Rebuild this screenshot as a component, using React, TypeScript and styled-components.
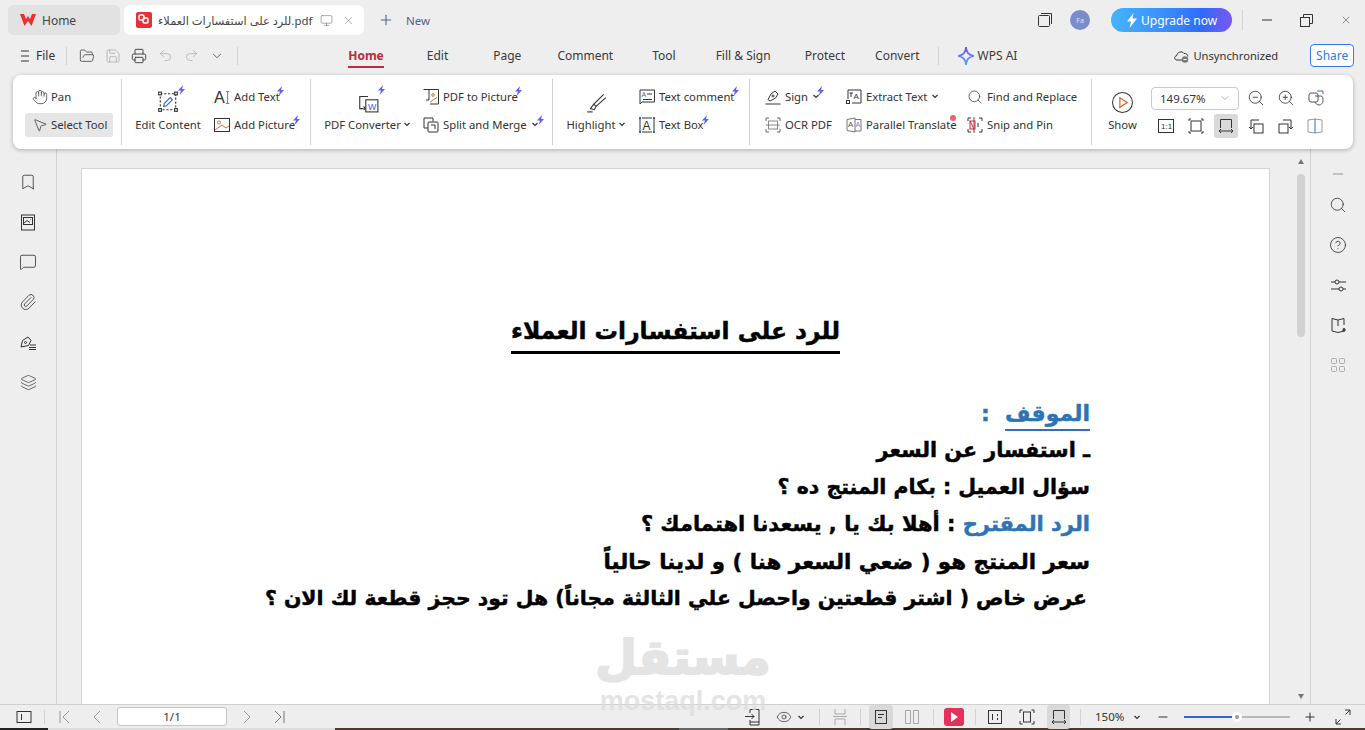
import { ReactNode } from 'react';
import styled, { createGlobalStyle } from 'styled-components';
import {
	Bookmark,
	ChevronDown,
	CircleHelp,
	Eye,
	FolderOpen,
	Hand,
	Layers,
	MessageSquare,
	Minus,
	Monitor,
	MousePointer2,
	Paperclip,
	Plus,
	Printer,
	Redo2,
	Save,
	Search,
	Undo2,
	X,
	ZoomIn,
	ZoomOut,
} from 'lucide-react';

const GlobalStyle = createGlobalStyle`
	html, body { margin: 0; padding: 0; background: #eee; }
	body { font-family: "Noto Sans", "DejaVu Sans", sans-serif; font-size: 12px; color: #333; }
	* { box-sizing: border-box; }
`;

const Screen = styled.div`
	position: relative;
	width: 1365px;
	height: 730px;
	display: flex;
	flex-direction: column;
	overflow: hidden;
	background: #eeeeee;
`;

const Row = styled.div<{ $h: number; $pl?: number; $pb?: number }>`
	display: flex;
	align-items: center;
	flex: none;
	height: ${(p) => p.$h}px;
	padding-left: ${(p) => p.$pl ?? 0}px;
	padding-bottom: ${(p) => p.$pb ?? 0}px;
`;

const Slot = styled.div<{ $w?: number; $ml?: number; $mb?: number; $on?: boolean }>`
	flex: none;
	display: flex;
	align-items: center;
	justify-content: center;
	width: ${(p) => p.$w ?? 22}px;
	height: 24px;
	margin-left: ${(p) => p.$ml ?? 0}px;
	margin-bottom: ${(p) => p.$mb ?? 0}px;
	border-radius: 3px;
	background: ${(p) => (p.$on ? '#d9d9d9' : 'transparent')};
	color: #333;
`;

const Sep = styled.div<{ $ml?: number; $h?: number }>`
	flex: none;
	width: 1px;
	height: ${(p) => p.$h ?? 22}px;
	margin-left: ${(p) => p.$ml ?? 0}px;
	background: #d2d2d2;
`;

/* title bar */
const Tab = styled.div<{ $active?: boolean; $w: number; $ml?: number }>`
	flex: none;
	display: flex;
	align-items: center;
	width: ${(p) => p.$w}px;
	height: 30px;
	margin-left: ${(p) => p.$ml ?? 0}px;
	padding-left: 12px;
	border-radius: 6px;
	background: ${(p) => (p.$active ? '#fff' : '#e2e2e2')};
`;

const TabLabel = styled.span<{ $ml: number; $w?: number; $size?: number }>`
	flex: none;
	margin-left: ${(p) => p.$ml}px;
	width: ${(p) => (p.$w ? `${p.$w}px` : 'auto')};
	font-size: ${(p) => p.$size ?? 12}px;
	color: #444;
	white-space: nowrap;
`;

const NewLabel = styled.span`
	margin-left: 12px;
	font-size: 11.5px;
	color: #50608a;
`;

const Avatar = styled.div`
	flex: none;
	display: flex;
	align-items: center;
	justify-content: center;
	width: 20px;
	height: 20px;
	margin-left: 17px;
	border-radius: 50%;
	background: #7c8ccb;
	color: #dfe4f5;
	font-size: 7px;
`;

const Upgrade = styled.div`
	flex: none;
	display: flex;
	align-items: center;
	justify-content: center;
	gap: 3px;
	width: 121px;
	height: 24px;
	margin-left: 21px;
	border-radius: 12px;
	background: linear-gradient(90deg, #45b4fb 0%, #3a8dfb 45%, #2f6bfb 75%, #7c57f5 100%);
	color: #fff;
	font-size: 12px;
`;

/* menu bar */
const MenuLabel = styled.span<{ $ml: number; $size?: number }>`
	flex: none;
	margin-left: ${(p) => p.$ml}px;
	white-space: nowrap;
	font-size: ${(p) => p.$size ?? 12}px;
	color: #333;
`;

const MenuTab = styled.div<{ $active?: boolean; $ml: number }>`
	flex: none;
	position: relative;
	margin-left: ${(p) => p.$ml}px;
	margin-top: 1px;
	line-height: 18px;
	font-size: 12px;
	white-space: nowrap;
	font-weight: ${(p) => (p.$active ? 700 : 400)};
	color: ${(p) => (p.$active ? '#c0283c' : '#3a3a3a')};
	&::after {
		content: '';
		display: ${(p) => (p.$active ? 'block' : 'none')};
		position: absolute;
		left: 0;
		right: 0;
		bottom: -3px;
		height: 2px;
		background: #c0283c;
	}
`;

const ShareButton = styled.div`
	flex: none;
	display: flex;
	align-items: center;
	justify-content: center;
	width: 44px;
	height: 23px;
	margin-left: 32px;
	border: 1px solid #2f7bf0;
	border-radius: 4px;
	background: #fff;
	color: #2f7bf0;
	font-size: 12px;
`;

/* ribbon */
const Ribbon = styled.div`
	position: relative;
	z-index: 2;
	flex: none;
	display: flex;
	width: 1340px;
	height: 74px;
	margin-left: 13px;
	padding: 4px 0;
	border-radius: 8px;
	background: #fff;
	box-shadow: 0 1px 4px rgba(0, 0, 0, 0.28);
`;

const Group = styled.div<{ $w: number; $pl: number; $last?: boolean }>`
	flex: none;
	display: flex;
	width: ${(p) => p.$w}px;
	padding-left: ${(p) => p.$pl}px;
	border-right: ${(p) => (p.$last ? 'none' : '1px solid #d2d2d2')};
`;

const Col = styled.div<{ $w?: number; $ml?: number }>`
	flex: none;
	display: flex;
	flex-direction: column;
	gap: 4px;
	padding-top: 6px;
	width: ${(p) => (p.$w ? `${p.$w}px` : 'auto')};
	margin-left: ${(p) => p.$ml ?? 0}px;
`;

const Item = styled.div<{ $on?: boolean; $pad?: boolean }>`
	position: relative;
	align-self: flex-start;
	display: flex;
	align-items: center;
	gap: ${(p) => (p.$pad ? 3 : 4)}px;
	height: 24px;
	padding: 0 ${(p) => (p.$pad ? 6 : 0)}px 2px ${(p) => (p.$pad ? 7 : 0)}px;
	border-radius: 3px;
	background: ${(p) => (p.$on ? '#e6e6e6' : 'transparent')};
	white-space: nowrap;
	font-size: 11.3px;
	color: #333;
`;

const IconBox = styled.span`
	flex: none;
	display: flex;
	align-items: center;
	justify-content: center;
	width: 16px;
	height: 16px;
	margin-bottom: -2px;
`;

const Big = styled.div<{ $w: number }>`
	position: relative;
	flex: none;
	width: ${(p) => p.$w}px;
	padding-top: 10px;
	display: flex;
	flex-direction: column;
	align-items: center;
	white-space: nowrap;
	font-size: 11.3px;
	color: #333;
`;

const BigIcon = styled.div`
	height: 26px;
	display: flex;
	align-items: center;
	justify-content: center;
`;

const BigLabel = styled.div`
	display: flex;
	align-items: center;
	height: 24px;
	gap: 2px;
	margin-top: -2px;
	padding-bottom: 2px;
`;

const BoltBadge = styled.span<{ $r: number; $t: number }>`
	position: absolute;
	right: ${(p) => p.$r}px;
	top: ${(p) => p.$t}px;
	display: flex;
`;

const RedDot = styled.span`
	position: absolute;
	right: 1px;
	top: 2px;
	width: 6px;
	height: 6px;
	border-radius: 50%;
	background: #f2605f;
`;

const ZoomSelect = styled.div`
	flex: none;
	display: flex;
	align-items: center;
	justify-content: space-between;
	width: 88px;
	height: 23px;
	margin-right: -1px;
	padding: 0 7px 0 8px;
	border: 1px solid #c9c9c9;
	border-radius: 4px;
	font-size: 11.5px;
	color: #333;
`;

const ZoomRows = styled.div`
	display: flex;
	flex-direction: column;
	gap: 4px;
	margin-left: 14px;
	padding-top: 7px;
`;

const ZoomRow = styled.div<{ $pl?: number }>`
	display: flex;
	align-items: center;
	gap: 6px;
	height: 24px;
	padding-left: ${(p) => p.$pl ?? 0}px;
`;

/* body */
const Body = styled.div`
	flex: 1;
	min-height: 0;
	display: flex;
`;

const SideBar = styled.div<{ $right?: boolean; $w: number; $top: number }>`
	flex: none;
	display: flex;
	flex-direction: column;
	align-items: center;
	gap: 16px;
	width: ${(p) => p.$w}px;
	padding-top: ${(p) => p.$top}px;
	border-${(p) => (p.$right ? 'left' : 'right')}: 1px solid #d2d2d2;
`;

const Canvas = styled.div`
	flex: 1;
	min-width: 0;
	display: flex;
	padding: 19px 0 0 24px;
`;

const Page = styled.div`
	flex: none;
	width: 1189px;
	margin-bottom: -4px;
	padding-top: 144px;
	border: 1px solid #d4d4d4;
	border-bottom: none;
	background: #fff;
	font-family: "DejaVu Sans", sans-serif;
	font-weight: 700;
	-webkit-text-stroke: 0.45px currentColor;
	color: #000;
	direction: rtl;
`;

const Title = styled.h1`
	margin: 0 auto;
	width: fit-content;
	height: 41px;
	line-height: 36px;
	border-bottom: 3px solid #000;
	font-size: 23.4px;
	font-weight: 700;
`;

const Lines = styled.div`
	margin-top: 41px;
	padding-right: 179px;
`;

const Line = styled.div<{ $size: number; $inset?: number }>`
	height: 37px;
	line-height: 37px;
	white-space: nowrap;
	font-size: ${(p) => p.$size}px;
	padding-right: ${(p) => p.$inset ?? 0}px;
`;

const Blue = styled.span<{ $rule?: boolean }>`
	color: #2e74b5;
	padding-bottom: ${(p) => (p.$rule ? 3 : 0)}px;
	border-bottom: ${(p) => (p.$rule ? '2px solid #2e74b5' : 'none')};
`;

const Scroll = styled.div`
	flex: none;
	position: relative;
	width: 40px;
	padding-left: 27px;
`;

const ScrollArrow = styled.div<{ $down?: boolean }>`
	position: absolute;
	left: 28px;
	${(p) => (p.$down ? 'bottom: 5px;' : 'top: -9px;')}
	width: 0;
	height: 0;
	border-left: 3.5px solid transparent;
	border-right: 3.5px solid transparent;
	${(p) => (p.$down ? 'border-top: 5px solid #777;' : 'border-bottom: 5px solid #777;')}
`;

const Thumb = styled.div`
	margin-top: 6px;
	width: 8px;
	height: 163px;
	border-radius: 4px;
	background: #d2d2d2;
`;

/* status bar */
const Status = styled.div`
	position: relative;
	z-index: 1;
	flex: none;
	display: flex;
	align-items: center;
	justify-content: space-between;
	height: 24px;
	border-top: 1px solid #d0d0d0;
	background: #eeeeee;
`;

const StatusSide = styled.div<{ $pl?: number; $pr?: number }>`
	display: flex;
	align-items: center;
	padding-left: ${(p) => p.$pl ?? 0}px;
	padding-right: ${(p) => p.$pr ?? 0}px;
`;

const PageInput = styled.div`
	flex: none;
	display: flex;
	align-items: center;
	justify-content: center;
	width: 110px;
	height: 19px;
	margin-left: 9px;
	border: 1px solid #c4c4c4;
	border-radius: 3px;
	background: #fff;
	font-size: 11.5px;
	color: #333;
`;

const PercentLabel = styled.span`
	flex: none;
	width: 28px;
	margin-left: 14px;
	font-size: 11.5px;
	color: #333;
`;

const Slider = styled.div`
	position: relative;
	flex: none;
	width: 106px;
	height: 2px;
	margin-left: 10px;
	background: #b8b8b8;
`;

const SliderFill = styled.div<{ $w: number }>`
	width: ${(p) => p.$w}px;
	height: 2px;
	background: #2f66c8;
`;

const SliderKnob = styled.div<{ $x: number }>`
	position: absolute;
	left: ${(p) => p.$x - 5}px;
	top: -4px;
	width: 10px;
	height: 10px;
	border: 3px solid #fff;
	border-radius: 50%;
	background: #999;
`;

const RedPlay = styled.div`
	flex: none;
	display: flex;
	align-items: center;
	justify-content: center;
	width: 20px;
	height: 18px;
	margin-left: 10px;
	border-radius: 3px;
	background: #e5305c;
`;

const Desktop = styled.div`
	flex: none;
	height: 2px;
	background: linear-gradient(
		90deg,
		#222 0,
		#222 48px,
		#ddd 48px,
		#ddd 335px,
		#4a3a30 335px,
		#4a3a30 679px,
		#666 679px,
		#666 728px,
		#4a3a30 728px
	);
`;

const Watermark = styled.div`
	position: absolute;
	z-index: 3;
	left: 597px;
	top: 629px;
	width: 172px;
	display: flex;
	flex-direction: column;
	align-items: center;
	pointer-events: none;
	color: #dcdcdc;
	opacity: 0.75;
	font-weight: 700;
`;

const WatermarkMain = styled.div`
	height: 57px;
	line-height: 57px;
	font-family: "DejaVu Sans", sans-serif;
	font-size: 48px;
	-webkit-text-stroke: 2px currentColor;
`;

const WatermarkSub = styled.div`
	height: 31px;
	line-height: 31px;
	font-family: "Liberation Sans", sans-serif;
	font-size: 27px;
`;

const Drawn = styled.svg`
	display: block;
	flex: none;
	fill: none;
	stroke: currentColor;
	stroke-width: 1;
	color: #333;
`;

const GlyphText = styled.text<{ $fill?: string }>`
	font-family: "Liberation Sans", sans-serif;
	stroke: none;
	fill: ${(p) => p.$fill ?? '#333'};
`;

function Svg({ s = 20, vb = 20, children }: { s?: number; vb?: number; children: ReactNode }) {
	return (
		<Drawn width={s} height={s} viewBox={`0 0 ${vb} ${vb}`}>
			{children}
		</Drawn>
	);
}

function Bolt({ r, t }: { r: number; t: number }) {
	return (
		<BoltBadge $r={r} $t={t}>
			<svg width="9" height="10" viewBox="0 0 9 10">
				<path d="M6 0 L1 5.6 H4 L2.6 10 L8 4 H5 Z" fill="#5b62f5" />
			</svg>
		</BoltBadge>
	);
}

const Chev = ({ s = 8 }: { s?: number }) => (
	<svg width={s} height={s} viewBox="0 0 8 8" fill="none" stroke="#333" strokeWidth="1.2">
		<path d="M1.5 3 L4 5.5 L6.5 3" />
	</svg>
);

const line = { size: 16, strokeWidth: 1.1, color: '#333' };

export default function App() {
	return (
		<Screen>
			<GlobalStyle />
			<Row $h={40} $pl={8}>
				<Tab $w={112}>
					<svg width="16" height="14" viewBox="0 0 16 14">
						<path d="M0 1 L4 1 L6 6 L8 3 L10 6 L12 1 L16 1 L11.5 13 L8 8 L4.5 13 Z" fill="#e8322e" />
					</svg>
					<TabLabel $ml={6}>Home</TabLabel>
				</Tab>
				<Tab $active $w={240} $ml={4}>
					<svg width="16" height="16" viewBox="0 0 16 16">
						<rect width="16" height="16" rx="2" fill="#e8303a" />
						<rect x="3" y="3" width="5" height="5" rx="1.5" fill="none" stroke="#fff" strokeWidth="1.5" />
						<rect x="7" y="6" width="5" height="5" rx="1.5" fill="none" stroke="#fff" strokeWidth="1.5" />
					</svg>
					<TabLabel $ml={6} $w={157} $size={11.4}>للرد على استفسارات العملاء.pdf</TabLabel>
					<Slot $w={14} $ml={4}>
						<Monitor size={13} strokeWidth={1} color="#666" />
					</Slot>
					<Slot $w={14} $ml={8}>
						<X size={13} strokeWidth={1} color="#777" />
					</Slot>
				</Tab>
				<Slot $w={16} $ml={14}>
					<Plus size={16} strokeWidth={1.6} color="#50608a" />
				</Slot>
				<NewLabel>New</NewLabel>
				<Slot $w={16} $ml={607}>
					<Svg s={16} vb={16}>
						<rect x="1.5" y="3.5" width="11" height="11" rx="1" />
						<path d="M4 1.5 H14.5 V12" />
					</Svg>
				</Slot>
				<Avatar>Fa</Avatar>
				<Upgrade>
					<svg width="12" height="15" viewBox="0 0 12 15">
						<path d="M7.5 0 L1 8.5 H5 L3.5 15 L11 5.5 H6.5 Z" fill="#fff" />
					</svg>
					Upgrade now
				</Upgrade>
				<Sep $ml={10} $h={20} />
				<Slot $w={12} $ml={18}>
					<Svg s={12} vb={12}>
						<path d="M1 6 H11" />
					</Svg>
				</Slot>
				<Slot $w={14} $ml={26}>
					<Svg s={13} vb={13}>
						<rect x="0.5" y="3.5" width="9" height="9" />
						<path d="M3.5 3 V0.5 H12.5 V9.5 H10" />
					</Svg>
				</Slot>
				<Slot $w={12} $ml={27}>
					<X size={14} strokeWidth={1} color="#333" />
				</Slot>
			</Row>
			<Row $h={35} $pl={15} $pb={4}>
				<Slot $w={18}>
					<Svg s={14} vb={14}>
						<path d="M4 2 H12 M4 7 H12 M4 12 H12" />
					</Svg>
				</Slot>
				<MenuLabel $ml={3}>File</MenuLabel>
				<Sep $ml={11} $h={18} />
				<Slot $w={20} $ml={10}>
					<FolderOpen {...line} />
				</Slot>
				<Slot $w={20} $ml={6}>
					<Save size={16} strokeWidth={1.1} color="#a8a8a8" />
				</Slot>
				<Slot $w={20} $ml={6}>
					<Printer size={16} strokeWidth={1.3} color="#333" />
				</Slot>
				<Slot $w={20} $ml={6}>
					<Undo2 size={15} strokeWidth={1.1} color="#a8a8a8" />
				</Slot>
				<Slot $w={20} $ml={6}>
					<Redo2 size={15} strokeWidth={1.1} color="#a8a8a8" />
				</Slot>
				<Slot $w={20} $ml={6}>
					<ChevronDown size={14} strokeWidth={1.4} color="#444" />
				</Slot>
				<Sep $ml={10} $h={18} />
				<MenuTab $active $ml={110}>Home</MenuTab>
				<MenuTab $ml={43}>Edit</MenuTab>
				<MenuTab $ml={45}>Page</MenuTab>
				<MenuTab $ml={36}>Comment</MenuTab>
				<MenuTab $ml={39}>Tool</MenuTab>
				<MenuTab $ml={40}>Fill &amp; Sign</MenuTab>
				<MenuTab $ml={34}>Protect</MenuTab>
				<MenuTab $ml={30}>Convert</MenuTab>
				<Sep $ml={18} $h={18} />
				<Slot $w={18} $ml={18}>
					<svg width="16" height="18" viewBox="0 0 16 18">
						<defs>
							<linearGradient id="aiStar" x1="0" y1="0" x2="0" y2="1">
								<stop offset="0" stopColor="#7a4df0" />
								<stop offset="1" stopColor="#4aa8f5" />
							</linearGradient>
						</defs>
						<path d="M8 0 C8.6 5.5 10 7.8 16 9 C10 10.2 8.6 12.5 8 18 C7.4 12.5 6 10.2 0 9 C6 7.8 7.4 5.5 8 0 Z" fill="none" stroke="url(#aiStar)" strokeWidth="1.7" />
					</svg>
				</Slot>
				<MenuTab $ml={3}>WPS AI</MenuTab>
				<Slot $w={18} $ml={155}>
					<Svg s={17} vb={17}>
						<path d="M9 13 H4 C1 13 1 9 3.8 8.6 C4 5 9 3.5 11 6.5 C13.5 6 15 8 14.8 9.5" />
						<circle cx="12" cy="12.5" r="3.2" fill="#777" stroke="none" />
						<path d="M10.4 12.5 H13.6" stroke="#fff" />
					</Svg>
				</Slot>
				<MenuLabel $ml={3} $size={11.2}>Unsynchronized</MenuLabel>
				<ShareButton>Share</ShareButton>
			</Row>
			<Ribbon>
				<Group $w={109} $pl={12}>
					<Col>
						<Item $pad>
							<IconBox>
								<Hand {...line} />
							</IconBox>
							Pan
						</Item>
						<Item $pad $on>
							<IconBox>
								<MousePointer2 {...line} />
							</IconBox>
							Select Tool
						</Item>
					</Col>
				</Group>
				<Group $w={189} $pl={13}>
					<Big $w={66}>
						<BigIcon>
							<Svg s={22}>
								<path d="M3 2.5 H17 V17 H3 Z" strokeDasharray="2 1.5" />
								<rect x="1.5" y="1" width="2.5" height="2.5" fill="#fff" />
								<rect x="16" y="1" width="2.5" height="2.5" fill="#fff" />
								<rect x="1.5" y="16" width="2.5" height="2.5" fill="#fff" />
								<rect x="16" y="16" width="2.5" height="2.5" fill="#fff" />
								<path d="M6 14 L6.6 11.4 L12 6 L14 8 L8.6 13.4 Z" stroke="#2f66e0" />
							</Svg>
						</BigIcon>
						<BigLabel>Edit Content</BigLabel>
						<Bolt r={15} t={6} />
					</Big>
					<Col $ml={13}>
						<Item>
							<IconBox>
								<Svg s={17}>
									<GlyphText x="0" y="16" fontSize="19">A</GlyphText>
									<path d="M16 3 V17 M14 3 H18 M14 17 H18" stroke="#2f66e0" />
								</Svg>
							</IconBox>
							Add Text
							<Bolt r={-5} t={1} />
						</Item>
						<Item>
							<IconBox>
								<Svg s={16} vb={16}>
									<rect x="0.5" y="1.5" width="15" height="13" />
									<circle cx="5" cy="5.5" r="1.5" stroke="#dd6b2a" />
									<path d="M1 13 L8 8 L12 11 L15 9" stroke="#dd6b2a" />
								</Svg>
							</IconBox>
							Add Picture
							<Bolt r={-6} t={2} />
						</Item>
					</Col>
				</Group>
				<Group $w={242} $pl={13}>
					<Big $w={87}>
						<BigIcon>
							<Svg s={22}>
								<path d="M10 5 H2.5 V16 H6" />
								<path d="M6 14 L7.5 16 L6 17" />
								<rect x="8" y="8" width="11" height="11" />
								<GlyphText x="10" y="17" fontSize="8" $fill="#2f66e0">W</GlyphText>
							</Svg>
						</BigIcon>
						<BigLabel>
							PDF Converter
							<Chev />
						</BigLabel>
						<Bolt r={25} t={6} />
					</Big>
					<Col $ml={12}>
						<Item>
							<IconBox>
								<Svg s={16} vb={16}>
									<path d="M6 0.5 H15.5 V15 H7 M0.5 0.5 H6 V11 H3" />
									<circle cx="10" cy="6" r="1.3" stroke="#dd6b2a" />
									<path d="M7 13 L14 8.5" stroke="#dd6b2a" />
								</Svg>
							</IconBox>
							PDF to Picture
							<Bolt r={-5} t={1} />
						</Item>
						<Item>
							<IconBox>
								<Svg s={16} vb={16}>
									<path d="M10 4.5 V1 H1 V11 H5" />
									<rect x="5" y="5" width="10" height="10" rx="1" />
									<path d="M8 8 H12 V12" />
								</Svg>
							</IconBox>
							Split and Merge
							<Chev />
							<Bolt r={-6} t={2} />
						</Item>
					</Col>
				</Group>
				<Group $w={197} $pl={13}>
					<Big $w={60}>
						<BigIcon>
							<Svg s={22}>
								<path d="M8 12 L17 3 M10 14 L19 6 M8 12 L5 16 L8.5 17 L10 14 Z" />
								<path d="M2 19 H7" />
							</Svg>
						</BigIcon>
						<BigLabel>
							Highlight
							<Chev />
						</BigLabel>
					</Big>
					<Col $ml={13}>
						<Item>
							<IconBox>
								<Svg s={16} vb={16}>
									<path d="M1 1 H15.5 V13 H3 L1 15 Z" />
									<GlyphText x="2.5" y="8" fontSize="7" $fill="#2f66e0">A</GlyphText>
									<path d="M8 5 H13 M4 10.5 H13" />
								</Svg>
							</IconBox>
							Text comment
							<Bolt r={-6} t={1} />
						</Item>
						<Item>
							<IconBox>
								<Svg s={16} vb={16}>
									<path d="M1 2 V14 M15 2 V14 M3 1 H13 M3 15 H13" />
									<rect x="0" y="0" width="2" height="2" fill="#2f66e0" stroke="none" />
									<rect x="14" y="0" width="2" height="2" fill="#2f66e0" stroke="none" />
									<rect x="0" y="14" width="2" height="2" fill="#2f66e0" stroke="none" />
									<rect x="14" y="14" width="2" height="2" fill="#2f66e0" stroke="none" />
									<GlyphText x="3.5" y="12.5" fontSize="12">A</GlyphText>
								</Svg>
							</IconBox>
							Text Box
							<Bolt r={-6} t={2} />
						</Item>
					</Col>
				</Group>
				<Group $w={342} $pl={15}>
					<Col $w={81}>
						<Item>
							<IconBox>
								<Svg s={16} vb={16}>
									<path d="M3 10.5 L6 5 L10 2 L13 5 L10.5 9 L5 12 Z" />
									<circle cx="8" cy="7" r="1" />
									<path d="M0.5 15 H15.5" />
								</Svg>
							</IconBox>
							Sign
							<Chev />
							<Bolt r={-5} t={1} />
						</Item>
						<Item>
							<IconBox>
								<Svg s={16} vb={16}>
									<path d="M1 4 V1 H4 M12 1 H15 V4 M1 12 V15 H4 M12 15 H15 V12" stroke="#666" />
									<rect x="3.5" y="4" width="9" height="8" stroke="#888" />
									<path d="M1 8 H15" stroke="#888" />
								</Svg>
							</IconBox>
							OCR PDF
						</Item>
					</Col>
					<Col $w={121}>
						<Item>
							<IconBox>
								<Svg s={16} vb={16}>
									<path d="M2 10 V1 H15 V14 H6" />
									<rect x="0.5" y="11.5" width="3" height="3" />
									<GlyphText x="7.5" y="9.5" fontSize="8">A</GlyphText>
									<path d="M3.5 4 H7 M5 4 V8" />
								</Svg>
							</IconBox>
							Extract Text
							<Chev />
						</Item>
						<Item>
							<IconBox>
								<Svg s={16} vb={16}>
									<path d="M1 2.5 L9 1 V15 L1 13.5 Z M9 2.5 H15 V14 H9" stroke="#777" />
									<GlyphText x="2" y="10" fontSize="8" $fill="#555">A</GlyphText>
									<GlyphText x="9.5" y="10" fontSize="7" $fill="#8a72d8">A</GlyphText>
								</Svg>
							</IconBox>
							Parallel Translate
							<RedDot />
						</Item>
					</Col>
					<Col>
						<Item>
							<IconBox>
								<Search size={16} strokeWidth={1.1} color="#333" />
							</IconBox>
							Find and Replace
						</Item>
						<Item>
							<IconBox>
								<Svg s={16} vb={16}>
									<path d="M1 4 V1 H4 M12 1 H15 V4 M1 12 V15 H4 M12 15 H15 V12" />
									<rect x="3" y="4" width="5" height="8" stroke="#c0283c" />
									<path d="M7 0 V16 M3 4 L7 12" stroke="#c0283c" />
									<path d="M11 6 V10" />
								</Svg>
							</IconBox>
							Snip and Pin
						</Item>
					</Col>
				</Group>
				<Group $w={261} $pl={16} $last>
					<Big $w={29}>
						<BigIcon>
							<Svg s={21}>
								<circle cx="10" cy="10" r="9.5" />
								<path d="M7.5 5.5 L14.5 10 L7.5 14.5 Z" stroke="#d9692a" strokeWidth="1.2" />
							</Svg>
						</BigIcon>
						<BigLabel>Show</BigLabel>
					</Big>
					<ZoomRows>
						<ZoomRow>
							<ZoomSelect>
								149.67%
								<ChevronDown size={12} strokeWidth={1.1} color="#777" />
							</ZoomSelect>
							<Slot $w={24}>
								<ZoomOut size={18} strokeWidth={1.1} color="#333" />
							</Slot>
							<Slot $w={24}>
								<ZoomIn size={18} strokeWidth={1.1} color="#333" />
							</Slot>
							<Slot $w={24}>
								<Svg s={16} vb={16}>
									<rect x="1" y="3" width="9" height="9" rx="2" stroke="#555" />
									<path d="M7 6 H13 C15 6 15 9 15 11 C15 13 13 15 11 15 C9 15 7 13 7 12" stroke="#555" />
									<path d="M9 1 H15 V4" stroke="#2f66e0" />
								</Svg>
							</Slot>
						</ZoomRow>
						<ZoomRow $pl={3}>
							<Slot $w={24}>
								<Svg s={16} vb={16}>
									<rect x="0.5" y="1.5" width="15" height="13" />
									<GlyphText x="3" y="11" fontSize="8">1:1</GlyphText>
								</Svg>
							</Slot>
							<Slot $w={24}>
								<Svg s={16} vb={16}>
									<rect x="3" y="3" width="10" height="10" />
									<path d="M1 3 V1 H3 M13 1 H15 V3 M1 13 V15 H3 M13 15 H15 V13" />
								</Svg>
							</Slot>
							<Slot $w={24} $on>
								<Svg s={18} vb={18}>
									<path d="M3.5 11 V2.5 H14.5 V11" />
									<path d="M2 14 H16 M4 12 L2 14 L4 16 M14 12 L16 14 L14 16" />
								</Svg>
							</Slot>
							<Slot $w={24}>
								<Svg s={16} vb={16}>
									<rect x="6" y="6" width="9" height="9" />
									<path d="M3 11 V2 H11 M1 9 L3 11 L5 9" />
								</Svg>
							</Slot>
							<Slot $w={24}>
								<Svg s={16} vb={16}>
									<rect x="1" y="6" width="9" height="9" />
									<path d="M5 2 H13 V11 M11 9 L13 11 L15 9" />
								</Svg>
							</Slot>
							<Slot $w={24} $ml={-1}>
								<Svg s={16} vb={16}>
									<path d="M1 2 L8 1 L15 2 V14 L8 15 L1 14 Z" stroke="#999" />
									<path d="M8 1 V15" stroke="#2f66e0" />
								</Svg>
							</Slot>
						</ZoomRow>
					</ZoomRows>
				</Group>
			</Ribbon>
			<Body>
				<SideBar $w={57} $top={21}>
					<Slot $w={24}>
						<Bookmark size={18} strokeWidth={1.1} color="#333" />
					</Slot>
					<Slot $w={24}>
						<Svg s={17} vb={17}>
							<rect x="1.5" y="1" width="13" height="15" />
							<rect x="3.5" y="3.5" width="9" height="7" />
							<path d="M4 9 L7 6.5 L10 8.5 M10.5 5.5 H11" />
						</Svg>
					</Slot>
					<Slot $w={24}>
						<MessageSquare size={18} strokeWidth={1.1} color="#333" />
					</Slot>
					<Slot $w={24}>
						<Paperclip size={18} strokeWidth={1.1} color="#333" />
					</Slot>
					<Slot $w={24}>
						<Svg s={17} vb={17}>
							<path d="M1 13 L2.5 6.5 L8 3 L11 6.5 L8.5 11.5 Z" />
							<circle cx="5.5" cy="8.5" r="1" />
							<path d="M10 11 H16 M9 13.5 H16 M9 15.5 H16" />
						</Svg>
					</Slot>
					<Slot $w={24}>
						<Layers size={17} strokeWidth={1.1} color="#444" />
					</Slot>
				</SideBar>
				<Canvas>
					<Page>
						<Title>للرد على استفسارات العملاء</Title>
						<Lines>
							<Line $size={22}>
								<Blue $rule>الموقف</Blue>
								<Blue>{'\u00a0\u00a0'}:</Blue>
							</Line>
							<Line $size={20.7}>ـ استفسار عن السعر</Line>
							<Line $size={20.5}>سؤال العميل : بكام المنتج ده ؟</Line>
							<Line $size={21}>
								<Blue>الرد المقترح</Blue> : أهلا بك يا , يسعدنا اهتمامك ؟
							</Line>
							<Line $size={21.4}>سعر المنتج هو ( ضعي السعر هنا ) و لدينا حالياً</Line>
							<Line $size={20.4} $inset={3}>
								عرض خاص ( اشتر قطعتين واحصل علي الثالثة مجاناً) هل تود حجز قطعة لك الان ؟
							</Line>
						</Lines>
					</Page>
					<Scroll>
						<ScrollArrow />
						<Thumb />
						<ScrollArrow $down />
					</Scroll>
				</Canvas>
				<SideBar $right $w={55} $top={13}>
					<Slot $w={24} $mb={-9}>
						<Minus size={16} strokeWidth={1.1} color="#777" />
					</Slot>
					<Slot $w={24}>
						<Search size={18} strokeWidth={1.1} color="#333" />
					</Slot>
					<Slot $w={24}>
						<CircleHelp size={18} strokeWidth={1.1} color="#333" />
					</Slot>
					<Slot $w={24}>
						<Svg s={17} vb={17}>
							<path d="M1 5 H5 M9 5 H16 M1 12 H9 M13 12 H16" />
							<circle cx="7" cy="5" r="2" />
							<circle cx="11" cy="12" r="2" />
						</Svg>
					</Slot>
					<Slot $w={24}>
						<Svg s={17} vb={17}>
							<path d="M8 3 L2 1.5 V14 L8 15.5 L14 14 V11 M8 3 L14 1.5 V8 M8 3 V9" />
							<path d="M12 13 H16 M14 11 V15" strokeWidth="1.2" />
						</Svg>
					</Slot>
					<Slot $w={24}>
						<Svg s={16} vb={16}>
							<g stroke="#aaa">
								<rect x="1.5" y="1.5" width="5" height="5" rx="1" />
								<rect x="9.5" y="1.5" width="5" height="5" rx="1" />
								<rect x="1.5" y="9.5" width="5" height="5" rx="1" />
								<rect x="9.5" y="9.5" width="5" height="5" rx="1" />
							</g>
						</Svg>
					</Slot>
				</SideBar>
			</Body>
			<Status>
				<StatusSide $pl={13}>
					<Slot $w={22}>
						<Svg s={16} vb={16}>
							<rect x="1" y="2.5" width="14" height="11" />
							<path d="M5.5 5 V11" />
						</Svg>
					</Slot>
					<Sep $ml={9} $h={14} />
					<Slot $w={22} $ml={9}>
						<Svg s={14} vb={14}>
							<g stroke="#999">
								<path d="M2 1 V13 M11 1 L5 7 L11 13" />
							</g>
						</Svg>
					</Slot>
					<Slot $w={22} $ml={10}>
						<Svg s={14} vb={14}>
							<path d="M10 1 L4 7 L10 13" stroke="#999" />
						</Svg>
					</Slot>
					<PageInput>1/1</PageInput>
					<Slot $w={22} $ml={9}>
						<Svg s={14} vb={14}>
							<path d="M4 1 L10 7 L4 13" stroke="#999" />
						</Svg>
					</Slot>
					<Slot $w={22} $ml={10}>
						<Svg s={14} vb={14}>
							<path d="M12 1 V13 M3 1 L9 7 L3 13" stroke="#777" />
						</Svg>
					</Slot>
				</StatusSide>
				<StatusSide $pr={11}>
					<Slot $w={22}>
						<Svg s={18} vb={18}>
							<path d="M6 5 V1.5 H15 V17 H6 V12" />
							<path d="M1 8.5 H10 M7.5 6 L10 8.5 L7.5 11 M6 14 H15" />
						</Svg>
					</Slot>
					<Slot $w={22} $ml={9}>
						<Eye size={16} strokeWidth={1.1} color="#333" />
					</Slot>
					<Slot $w={12}>
						<Chev />
					</Slot>
					<Sep $ml={12} $h={16} />
					<Slot $w={22} $ml={9}>
						<Svg s={16} vb={16}>
							<path d="M3 0 V5 H13 V0 M3 16 V10 H13 V16 M1 7.5 H15" stroke="#aaa" />
						</Svg>
					</Slot>
					<Sep $ml={9} $h={16} />
					<Slot $w={24} $ml={8} $on>
						<Svg s={16} vb={16}>
							<rect x="2.5" y="1.5" width="11" height="13" />
							<path d="M5 5.5 H11 M5 8.5 H9" />
						</Svg>
					</Slot>
					<Slot $w={22} $ml={8}>
						<Svg s={16} vb={16}>
							<g stroke="#aaa">
								<rect x="1.5" y="1.5" width="5" height="13" />
								<rect x="9.5" y="1.5" width="5" height="13" />
							</g>
						</Svg>
					</Slot>
					<Sep $ml={10} $h={16} />
					<RedPlay>
						<svg width="8" height="10" viewBox="0 0 8 10">
							<path d="M1 0 L8 5 L1 10 Z" fill="#fff" />
						</svg>
					</RedPlay>
					<Sep $ml={11} $h={16} />
					<Slot $w={22} $ml={8}>
						<Svg s={16} vb={16}>
							<rect x="1.5" y="1.5" width="13" height="13" />
							<path d="M5.5 5 V11 M10.5 5 V7 M10.5 9 V11" />
						</Svg>
					</Slot>
					<Slot $w={22} $ml={10}>
						<Svg s={16} vb={16}>
							<rect x="4.5" y="3" width="7" height="10" />
							<path d="M1 4 V1 H3.5 M12.5 1 H15 V4 M1 12 V15 H3.5 M12.5 15 H15 V12" />
						</Svg>
					</Slot>
					<Slot $w={23} $ml={9} $on>
						<Svg s={18} vb={18}>
							<path d="M3.5 11 V2.5 H14.5 V11" />
							<path d="M2 14 H16 M4 12 L2 14 L4 16 M14 12 L16 14 L14 16" />
						</Svg>
					</Slot>
					<Sep $ml={10} $h={16} />
					<PercentLabel>150%</PercentLabel>
					<Slot $w={12} $ml={8}>
						<Chev />
					</Slot>
					<Slot $w={22} $ml={9}>
						<Minus size={14} strokeWidth={1.8} color="#333" />
					</Slot>
					<Slider>
						<SliderFill $w={53} />
						<SliderKnob $x={53} />
					</Slider>
					<Slot $w={22} $ml={9}>
						<Plus size={14} strokeWidth={1.8} color="#333" />
					</Slot>
					<Slot $w={22} $ml={11}>
						<Svg s={16} vb={16}>
							<path d="M10 1 H15 V6 M15 1 L10.5 5.5 M6 15 H1 V10 M1 15 L5.5 10.5" />
						</Svg>
					</Slot>
				</StatusSide>
			</Status>
			<Desktop />
			<Watermark>
				<WatermarkMain>مستقل</WatermarkMain>
				<WatermarkSub>mostaql.com</WatermarkSub>
			</Watermark>
		</Screen>
	);
}
